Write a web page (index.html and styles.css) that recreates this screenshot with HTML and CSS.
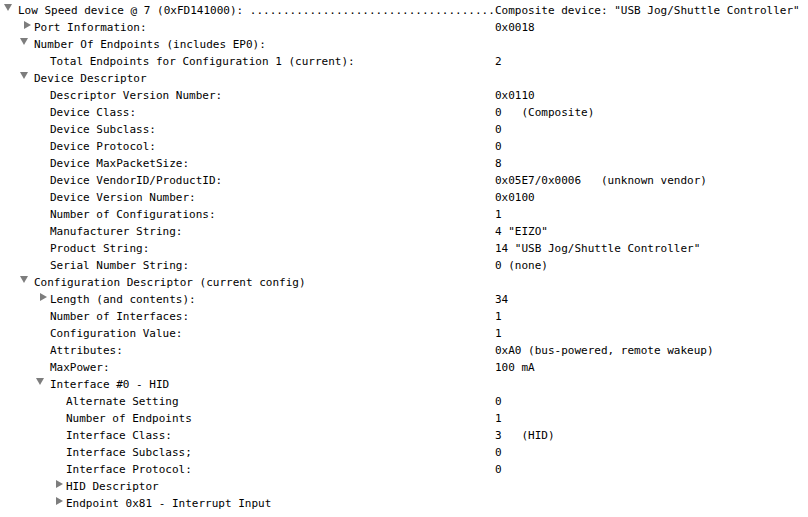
FILE: index.html
```html
<!DOCTYPE html>
<html>
<head>
<meta charset="utf-8">
<link rel="stylesheet" href="styles.css">
</head>
<body>
<div class="tree">
  <div class="row"><div class="key l0"><span class="tog down"></span><span class="txt">Low Speed device @ 7 (0xFD141000): .....................................</span></div><div class="val">Composite device: "USB Jog/Shuttle Controller"</div></div>
  <div class="row"><div class="key l1"><span class="tog right"></span><span class="txt">Port Information:</span></div><div class="val">0x0018</div></div>
  <div class="row"><div class="key l1"><span class="tog down"></span><span class="txt">Number Of Endpoints (includes EP0):</span></div><div class="val"></div></div>
  <div class="row"><div class="key l2"><span class="tog"></span><span class="txt">Total Endpoints for Configuration 1 (current):</span></div><div class="val">2</div></div>
  <div class="row"><div class="key l1"><span class="tog down"></span><span class="txt">Device Descriptor</span></div><div class="val"></div></div>
  <div class="row"><div class="key l2"><span class="tog"></span><span class="txt">Descriptor Version Number:</span></div><div class="val">0x0110</div></div>
  <div class="row"><div class="key l2"><span class="tog"></span><span class="txt">Device Class:</span></div><div class="val">0   (Composite)</div></div>
  <div class="row"><div class="key l2"><span class="tog"></span><span class="txt">Device Subclass:</span></div><div class="val">0</div></div>
  <div class="row"><div class="key l2"><span class="tog"></span><span class="txt">Device Protocol:</span></div><div class="val">0</div></div>
  <div class="row"><div class="key l2"><span class="tog"></span><span class="txt">Device MaxPacketSize:</span></div><div class="val">8</div></div>
  <div class="row"><div class="key l2"><span class="tog"></span><span class="txt">Device VendorID/ProductID:</span></div><div class="val">0x05E7/0x0006   (unknown vendor)</div></div>
  <div class="row"><div class="key l2"><span class="tog"></span><span class="txt">Device Version Number:</span></div><div class="val">0x0100</div></div>
  <div class="row"><div class="key l2"><span class="tog"></span><span class="txt">Number of Configurations:</span></div><div class="val">1</div></div>
  <div class="row"><div class="key l2"><span class="tog"></span><span class="txt">Manufacturer String:</span></div><div class="val">4 "EIZO"</div></div>
  <div class="row"><div class="key l2"><span class="tog"></span><span class="txt">Product String:</span></div><div class="val">14 "USB Jog/Shuttle Controller"</div></div>
  <div class="row"><div class="key l2"><span class="tog"></span><span class="txt">Serial Number String:</span></div><div class="val">0 (none)</div></div>
  <div class="row"><div class="key l1"><span class="tog down"></span><span class="txt">Configuration Descriptor (current config)</span></div><div class="val"></div></div>
  <div class="row"><div class="key l2"><span class="tog right"></span><span class="txt">Length (and contents):</span></div><div class="val">34</div></div>
  <div class="row"><div class="key l2"><span class="tog"></span><span class="txt">Number of Interfaces:</span></div><div class="val">1</div></div>
  <div class="row"><div class="key l2"><span class="tog"></span><span class="txt">Configuration Value:</span></div><div class="val">1</div></div>
  <div class="row"><div class="key l2"><span class="tog"></span><span class="txt">Attributes:</span></div><div class="val">0xA0 (bus-powered, remote wakeup)</div></div>
  <div class="row"><div class="key l2"><span class="tog"></span><span class="txt">MaxPower:</span></div><div class="val">100 mA</div></div>
  <div class="row"><div class="key l2"><span class="tog down"></span><span class="txt">Interface #0 - HID</span></div><div class="val"></div></div>
  <div class="row"><div class="key l3"><span class="tog"></span><span class="txt">Alternate Setting</span></div><div class="val">0</div></div>
  <div class="row"><div class="key l3"><span class="tog"></span><span class="txt">Number of Endpoints</span></div><div class="val">1</div></div>
  <div class="row"><div class="key l3"><span class="tog"></span><span class="txt">Interface Class:</span></div><div class="val">3   (HID)</div></div>
  <div class="row"><div class="key l3"><span class="tog"></span><span class="txt">Interface Subclass;</span></div><div class="val">0</div></div>
  <div class="row"><div class="key l3"><span class="tog"></span><span class="txt">Interface Protocol:</span></div><div class="val">0</div></div>
  <div class="row"><div class="key l3"><span class="tog right"></span><span class="txt">HID Descriptor</span></div><div class="val"></div></div>
  <div class="row"><div class="key l3"><span class="tog right"></span><span class="txt">Endpoint 0x81 - Interrupt Input</span></div><div class="val"></div></div>
</div>
</body>
</html>
```
FILE: styles.css
```css
html, body {
  margin: 0;
  padding: 0;
  background: #ffffff;
}
.tree {
  font-family: "DejaVu Sans Mono", "Liberation Mono", monospace;
  font-size: 11px;
  color: #000000;
  display: flex;
  flex-direction: column;
  padding-top: 2px;
}
.row {
  display: grid;
  grid-template-columns: 495px 1fr;
  height: 17px;
  line-height: 17px;
  white-space: pre;
}
.key {
  display: flex;
  align-items: stretch;
  overflow: hidden;
}
.l0 { padding-left: 0; }
.l1 { padding-left: 16px; }
.l2 { padding-left: 32px; }
.l3 { padding-left: 48px; }
.tog {
  width: 16px;
  flex: none;
  position: relative;
}
.txt {
  margin-left: 2px;
}
.tog.down::before {
  content: "";
  position: absolute;
  left: 4px;
  top: 2px;
  width: 0;
  height: 0;
  border-left: 4px solid transparent;
  border-right: 4px solid transparent;
  border-top: 7px solid #7d7d7d;
}
.tog.right::before {
  content: "";
  position: absolute;
  left: 8px;
  top: 2px;
  width: 0;
  height: 0;
  border-top: 4px solid transparent;
  border-bottom: 4px solid transparent;
  border-left: 7px solid #7d7d7d;
}
.val {
  overflow: hidden;
}
```
